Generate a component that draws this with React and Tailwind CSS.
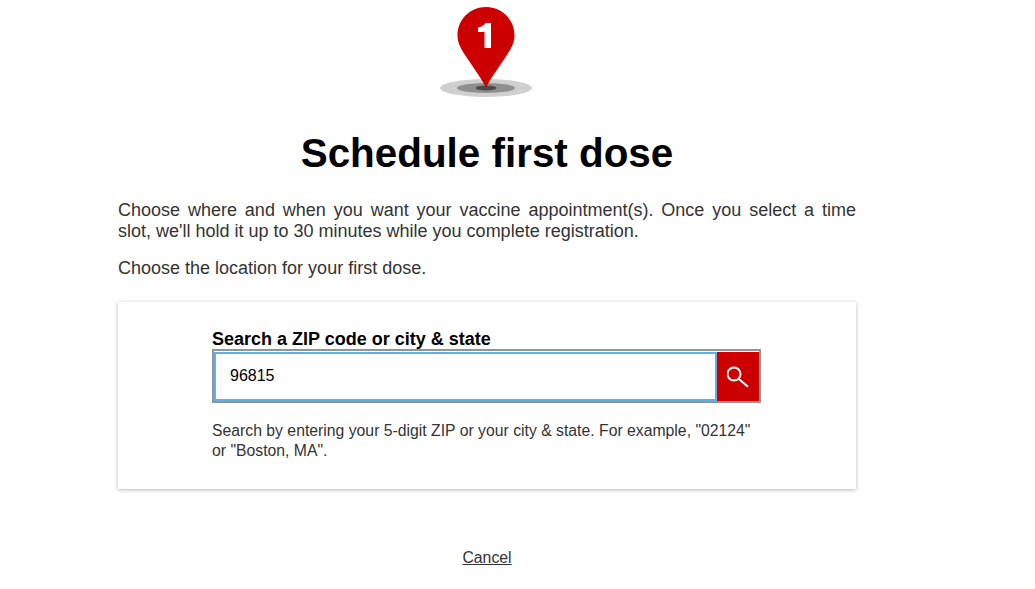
export default function App() {
  return (
    <div className="min-h-[589px] bg-white text-[#333] font-['Liberation_Sans',Arial,sans-serif]">
      <div className="ml-[118px] w-[738px]">
        <div className="flex justify-center pt-[7px] pr-[2px]">
          <svg width="94" height="91" viewBox="0 0 94 91" className="block">
            <ellipse cx="47" cy="81" rx="46" ry="9" fill="#cfcfcf" />
            <ellipse cx="47" cy="81" rx="29" ry="5" fill="#8f8f8f" />
            <ellipse cx="47" cy="81" rx="10.5" ry="2.5" fill="#4a4a4a" />
            <path d="M47 81 C43 72 36 63 28 51 C22 42 18.5 36 18.5 28.5 C18.5 12.5 31 0 47 0 C63 0 75.5 12.5 75.5 28.5 C75.5 36 72 42 66 51 C58 63 51 72 47 81 Z" fill="#cc0000" />
            <path d="M39 20.5 C42 20 45 18.5 46.5 16 H52 V41 H45.5 V25 H39 Z" fill="#ffffff" />
          </svg>
        </div>
        <h1 className="mt-[30px] text-center text-[40.4px] leading-[50px] font-bold text-black">Schedule first dose</h1>
        <p className="mt-[22px] text-[18px] leading-[21px] text-justify">
          Choose where and when you want your vaccine appointment(s). Once you select a time slot, we'll hold it up to 30 minutes while you complete registration.
        </p>
        <p className="mt-[16px] text-[18px] leading-[21px]">Choose the location for your first dose.</p>
        <div className="mt-[23px] h-[187px] bg-white shadow-[0_1px_4px_rgba(0,0,0,0.28)] pl-[94px] pt-[27px]">
          <label className="block text-[18px] leading-[20px] font-bold text-black">Search a ZIP code or city &amp; state</label>
          <div className="flex w-[549px] h-[54px] border-2 border-[#949494] pt-px">
            <div className="flex-1 border-2 border-[#68aee3] bg-white flex items-center pl-[14px] pb-[2px] text-[16px] text-black">96815</div>
            <button className="w-[42px] bg-[#cc0000] flex items-center justify-center">
              <svg width="22" height="22" viewBox="0 0 22 22" fill="none" stroke="#fff" strokeWidth="2" strokeLinecap="butt">
                <circle cx="7" cy="8" r="6.5" />
                <path d="M11.5 12.8 L21 20.8" />
              </svg>
            </button>
          </div>
          <p className="mt-[18px] w-[549px] text-[15.77px] leading-[20px]">
            Search by entering your 5-digit ZIP or your city &amp; state. For example, "02124" or "Boston, MA".
          </p>
        </div>
        <div className="mt-[59px] text-center text-[15.8px] leading-[20px]">
          <a className="underline">Cancel</a>
        </div>
      </div>
    </div>
  );
}
